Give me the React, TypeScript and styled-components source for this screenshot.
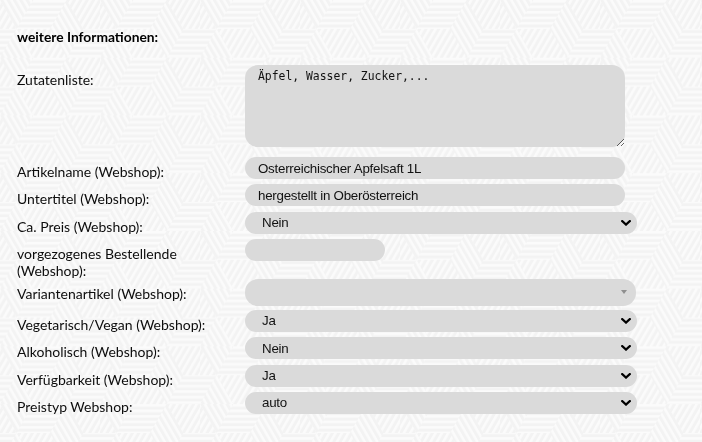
import React from "react";
import styled, { createGlobalStyle } from "styled-components";

const GlobalStyle = createGlobalStyle`
  html {
    background: #f4f4f4;
  }
  html, body {
    margin: 0;
    padding: 0;
  }
  body {
    background: transparent;
    font-family: Lato, "Open Sans", sans-serif;
    color: #111;
  }
`;

/* ---------- tiled backdrop: striped tumbling blocks ---------- */

const Backdrop = styled.svg`
  position: fixed;
  inset: 0;
  width: 100%;
  height: 100%;
  z-index: -1;
  display: block;
`;

const A = 100 / 3;
const H = (A * Math.sqrt(3)) / 2;
const TILE_W = 3 * A;
const TILE_H = 2 * H;
const BASE = "#f3f3f3";
const STRIPE = "#fbfbfb";

const hexCentres: Array<[number, number]> = [
  [0, 0],
  [TILE_W, 0],
  [0, TILE_H],
  [TILE_W, TILE_H],
  [TILE_W / 2, H],
  [TILE_W / 2, -H],
  [TILE_W / 2, TILE_H + H],
];

const pts = (list: Array<[number, number]>) =>
  list.map(([x, y]) => `${x.toFixed(2)},${y.toFixed(2)}`).join(" ");

const StripeFill: React.FC<{ id: string; angle: number }> = ({ id, angle }) => (
  <pattern
    id={id}
    patternUnits="userSpaceOnUse"
    width="5.5"
    height="5.5"
    patternTransform={`rotate(${angle})`}
  >
    <rect x="0" y="0" width="5.5" height="2.6" fill={STRIPE} />
  </pattern>
);

const BlockPattern: React.FC = () => (
  <Backdrop aria-hidden="true">
    <defs>
      <StripeFill id="stripeH" angle={0} />
      <StripeFill id="stripeA" angle={60} />
      <StripeFill id="stripeB" angle={-60} />
      <pattern id="blocks" patternUnits="userSpaceOnUse" width={TILE_W} height={TILE_H}>
        <rect width={TILE_W} height={TILE_H} fill={BASE} />
        {hexCentres.map(([cx, cy], i) => (
          <g key={i}>
            <polygon
              fill="url(#stripeH)"
              points={pts([
                [cx, cy],
                [cx - A, cy],
                [cx - A / 2, cy - H],
                [cx + A / 2, cy - H],
              ])}
            />
            <polygon
              fill="url(#stripeA)"
              points={pts([
                [cx, cy],
                [cx + A / 2, cy - H],
                [cx + A, cy],
                [cx + A / 2, cy + H],
              ])}
            />
            <polygon
              fill="url(#stripeB)"
              points={pts([
                [cx, cy],
                [cx + A / 2, cy + H],
                [cx - A / 2, cy + H],
                [cx - A, cy],
              ])}
            />
          </g>
        ))}
      </pattern>
    </defs>
    <rect width="100%" height="100%" fill="url(#blocks)" />
  </Backdrop>
);

/* ---------- form ---------- */

const Page = styled.main`
  padding: 28px 17px 0;
`;

const Heading = styled.h3`
  margin: 0 0 19px;
  font-size: 13.8px;
  line-height: 18px;
  font-weight: 700;
  color: #000;
`;

const Row = styled.div`
  display: grid;
  grid-template-columns: 228px auto;
  align-items: start;
`;

const Label = styled.label`
  display: block;
  padding-top: 6px;
  font-size: 14px;
  line-height: 17px;
  color: #0d0d0d;
`;

const fieldBase = `
  box-sizing: border-box;
  display: block;
  border: none;
  outline: none;
  background: #dadada;
  color: #111;
  font-family: "Liberation Sans", Arial, sans-serif;
  font-size: 13.33px;
  letter-spacing: -0.25px;
`;

const TextArea = styled.textarea`
  ${fieldBase}
  width: 380px;
  height: 82px;
  margin: 0 0 10px;
  padding: 5px 13px;
  border-radius: 13px;
  font-family: "DejaVu Sans Mono", "Liberation Mono", monospace;
  font-size: 11.4px;
  letter-spacing: 0;
  line-height: 13px;
  resize: both;
`;

const TextInput = styled.input<{ $width?: number }>`
  ${fieldBase}
  width: ${(p) => p.$width ?? 380}px;
  height: 22px;
  margin: 0 0 5.33px;
  padding: 0 13px;
  border-radius: 11px;
`;

const SelectBox = styled.div`
  position: relative;
  width: 392px;
  height: 22px;
  margin: 0 0 5.33px;
`;

const NativeSelect = styled.select`
  ${fieldBase}
  appearance: none;
  -webkit-appearance: none;
  width: 100%;
  height: 100%;
  padding: 0 24px 0 17px;
  border-radius: 11px;
`;

const Chevron = styled.svg`
  position: absolute;
  right: 6px;
  top: 50%;
  width: 10px;
  height: 6px;
  margin-top: -3px;
  pointer-events: none;
`;

const ComboBox = styled.div`
  position: relative;
  box-sizing: border-box;
  width: 391px;
  height: 27px;
  margin: 0 0 4px;
  border-radius: 13px;
  background: #dadada;
`;

const Caret = styled.svg`
  position: absolute;
  right: 9px;
  top: 50%;
  width: 6px;
  height: 4px;
  margin-top: -2px;
`;

type SelectFieldProps = { value: string; options: string[] };

const SelectField: React.FC<SelectFieldProps> = ({ value, options }) => (
  <SelectBox>
    <NativeSelect defaultValue={value}>
      {options.map((o) => (
        <option key={o} value={o}>
          {o}
        </option>
      ))}
    </NativeSelect>
    <Chevron viewBox="0 0 10 6" aria-hidden="true">
      <path
        d="M1.2 1.1 L5 4.6 L8.8 1.1"
        fill="none"
        stroke="#000"
        strokeWidth="2.2"
        strokeLinecap="square"
      />
    </Chevron>
  </SelectBox>
);

const yesNo = ["Ja", "Nein"];

export default function App() {
  return (
    <>
      <GlobalStyle />
      <BlockPattern />
      <Page>
        <Heading>weitere Informationen:</Heading>

        <Row>
          <Label>Zutatenliste:</Label>
          <TextArea defaultValue="Äpfel, Wasser, Zucker,..." />
        </Row>

        <Row>
          <Label>Artikelname (Webshop):</Label>
          <TextInput defaultValue="Osterreichischer Apfelsaft 1L" />
        </Row>

        <Row>
          <Label>Untertitel (Webshop):</Label>
          <TextInput defaultValue="hergestellt in Oberösterreich" />
        </Row>

        <Row>
          <Label>Ca. Preis (Webshop):</Label>
          <SelectField value="Nein" options={yesNo} />
        </Row>

        <Row>
          <Label>
            vorgezogenes Bestellende
            <br />
            (Webshop):
          </Label>
          <TextInput $width={140} defaultValue="" />
        </Row>

        <Row>
          <Label>Variantenartikel (Webshop):</Label>
          <ComboBox>
            <Caret viewBox="0 0 6 4" aria-hidden="true">
              <path d="M0 0 L6 0 L3 4 Z" fill="#8f8f8f" />
            </Caret>
          </ComboBox>
        </Row>

        <Row>
          <Label>Vegetarisch/Vegan (Webshop):</Label>
          <SelectField value="Ja" options={yesNo} />
        </Row>

        <Row>
          <Label>Alkoholisch (Webshop):</Label>
          <SelectField value="Nein" options={yesNo} />
        </Row>

        <Row>
          <Label>Verfügbarkeit (Webshop):</Label>
          <SelectField value="Ja" options={yesNo} />
        </Row>

        <Row>
          <Label>Preistyp Webshop:</Label>
          <SelectField value="auto" options={["auto", "manuell"]} />
        </Row>
      </Page>
    </>
  );
}
